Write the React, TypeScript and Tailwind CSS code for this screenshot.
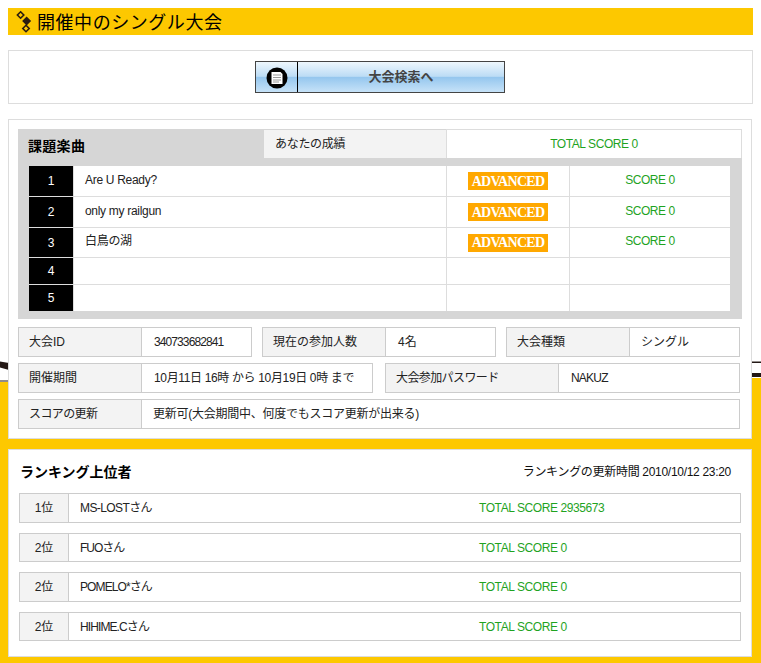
const jp = '"Liberation Sans","Noto Sans CJK JP",sans-serif';

function TitleIcon() {
  return (
    <svg width="18" height="24" viewBox="0 0 18 24" className="shrink-0">
      <path d="M4.6 1.8 L7.8 5 L4.6 8.2 L1.4 5 Z" fill="#fdc800" stroke="#2b1d10" strokeWidth="1.6" />
      <path d="M10.6 6.5 L15.1 11 L10.6 15.5 L6.1 11 Z" fill="#2b1d10" />
      <path d="M10 15.3 L13.2 18.5 L10 21.7 L6.8 18.5 Z" fill="#fdc800" stroke="#2b1d10" strokeWidth="1.6" />
    </svg>
  );
}

function DocIcon() {
  return (
    <svg width="22" height="22" viewBox="0 0 22 22">
      <circle cx="11" cy="11" r="10.5" fill="#000" />
      <path d="M5.5 5 H14.5 L16.5 7 V17 H5.5 Z" fill="#fff" />
      <path d="M7 8 H15 M7 10.5 H15 M7 13 H15 M7 15 H13" stroke="#999" strokeWidth="1" />
    </svg>
  );
}

function Green({ children, className = "" }: { children: React.ReactNode; className?: string }) {
  return <span className={"text-[12px] tracking-[-0.42px] text-[#1fa31f] whitespace-nowrap " + className}>{children}</span>;
}

function Advanced() {
  return (
    <span className="flex h-[18px] w-[80px] items-center justify-center bg-[#ffa800] font-['Liberation_Serif',serif] text-[14px] font-bold tracking-[-0.7px] text-white">
      ADVANCED
    </span>
  );
}

const songs = [
  { n: "1", t: "Are U Ready?", h: "h-[31px]", adv: true },
  { n: "2", t: "only my railgun", h: "h-[31px]", adv: true },
  { n: "3", t: "白鳥の湖", h: "h-[30px]", adv: true },
  { n: "4", t: "", h: "h-[27px]", adv: false },
  { n: "5", t: "", h: "h-[26px]", adv: false },
];

function Info({
  label,
  value,
  w,
  lw,
  lt = "",
  vt = "",
}: {
  label: string;
  value: string;
  w: string;
  lw: string;
  lt?: string;
  vt?: string;
}) {
  return (
    <div className={"flex h-[30px] border border-[#cccccc] bg-white text-[12px] text-[#222] " + w}>
      <div className={"flex items-center border-r border-[#cccccc] bg-[#f3f3f3] pl-[10px] whitespace-nowrap " + lw + " " + lt}>{label}</div>
      <div className={"flex flex-1 items-center pl-[12px] whitespace-nowrap " + vt}>{value}</div>
    </div>
  );
}

const ranks = [
  { r: "1位", n: "MS-LOSTさん", s: "TOTAL SCORE 2935673", h: "h-[30px]", m: "mb-[10px]", t: "tracking-[-0.6px]" },
  { r: "2位", n: "FUOさん", s: "TOTAL SCORE 0", h: "h-[29px]", m: "mb-[10px]", t: "tracking-[-1px]" },
  { r: "2位", n: "POMELO*さん", s: "TOTAL SCORE 0", h: "h-[30px]", m: "mb-[10px]", t: "tracking-[-0.9px]" },
  { r: "2位", n: "HIHIME.Cさん", s: "TOTAL SCORE 0", h: "h-[29px]", m: "", t: "tracking-[-0.9px]" },
];

export default function App() {
  return (
    <div
      className="relative h-[663px] w-[761px] overflow-hidden bg-[linear-gradient(to_bottom,#ffffff_0,#ffffff_382px,#fdc800_382px,#fdc800_100%)] pl-[8px] pt-[8px] text-black"
      style={{ fontFamily: jp }}
    >
      <svg width="761" height="30" viewBox="0 0 761 30" className="absolute left-0 top-[358px]">
        <path d="M0 3.5 L9 5 L9 12 L0 9.5 Z" fill="#231815" />
        <path d="M0 22.5 H9 V23.5 H0 Z" fill="#231815" />
        <path d="M752 3.5 H761 V5 H752 Z" fill="#231815" />
        <path d="M752 15 H761 V19 H752 Z" fill="#231815" />
        <path d="M752 20 H761 V30 H752 Z" fill="#fdc800" />
      </svg>

      <div className="relative w-[745px]">
        <h1 className="flex h-[27px] items-center gap-[3px] bg-[#fdc800] pl-[8px] text-[18px] font-normal leading-none tracking-[0.55px]">
          <TitleIcon />
          <span className="pt-[3px]">開催中のシングル大会</span>
        </h1>

        <div className="mt-[15px] flex h-[54px] items-center justify-center border border-[#dddddd] bg-white pr-[1px]">
          <button className="flex h-[32px] w-[250px] border border-[#444444] bg-[linear-gradient(to_bottom,#eef7fd_0%,#bcdcf5_48%,#94c6ee_50%,#c6e2f8_100%)]">
            <span className="flex h-full w-[42px] items-center justify-center border-r border-black pt-px">
              <DocIcon />
            </span>
            <span className="flex h-full flex-1 items-center justify-center text-[13px] font-bold text-[#444444]">
              大会検索へ
            </span>
          </button>
        </div>

        <div className="mt-[15px] h-[320px] w-[744px] border border-[#dddddd] bg-white p-[9px]">
          <div className="h-[190px] w-[724px] bg-[#d6d6d6]">
            <div className="flex h-[29px] items-stretch">
              <div className="flex w-[246px] items-center pl-[10px] pt-[5px] text-[14px] font-bold tracking-[0.3px]">課題楽曲</div>
              <div className="mt-px flex w-[182px] items-center bg-[#f3f3f3] pl-[11px] text-[12px] tracking-[-0.3px] text-[#222]">
                あなたの成績
              </div>
              <div className="flex flex-1 items-center justify-center border-l border-r border-t border-[#dddddd] bg-white">
                <Green>TOTAL SCORE 0</Green>
              </div>
            </div>
            <div className="ml-[11px] mt-[8px] w-[701px] bg-white">
              {songs.map((s, i) => (
                <div key={s.n} className={"flex " + s.h + (i < 4 ? " border-b border-[#dddddd]" : "")}>
                  <div className="flex w-[45px] items-center justify-center border-r border-[#dddddd] text-[12px] text-white">
                    <span className="flex h-full w-full items-center justify-center bg-black">{s.n}</span>
                  </div>
                  <div className="flex w-[372px] items-center pb-[3px] pl-[11px] text-[12px] tracking-[-0.3px] text-[#222]">{s.t}</div>
                  <div className="flex w-[124px] items-center justify-center border-x border-[#dddddd]">
                    {s.adv && <Advanced />}
                  </div>
                  <div className="flex flex-1 items-center justify-center pb-[3px]">
                    {s.adv && <Green>SCORE 0</Green>}
                  </div>
                </div>
              ))}
            </div>
          </div>

          <div className="mt-[8px] flex gap-[10px]">
            <Info label="大会ID" value="340733682841" w="w-[234px]" lw="w-[123px]" vt="tracking-[-0.9px]" />
            <Info label="現在の参加人数" value="4名" w="w-[234px]" lw="w-[123px]" />
            <Info label="大会種類" value="シングル" w="w-[234px]" lw="w-[123px]" vt="-ml-px" />
          </div>
          <div className="mt-[6px] flex gap-[12px]">
            <Info label="開催期間" value="10月11日 16時 から 10月19日 0時 まで" w="w-[355px]" lw="w-[123px]" vt="tracking-[-0.35px]" />
            <Info label="大会参加パスワード" value="NAKUZ" w="w-[355px]" lw="w-[173px]" lt="tracking-[-0.6px]" vt="tracking-[-0.8px]" />
          </div>
          <div className="mt-[6px]">
            <Info label="スコアの更新" value="更新可(大会期間中、何度でもスコア更新が出来る)" w="w-[722px]" lw="w-[123px]" lt="tracking-[-0.6px]" vt="-ml-px tracking-[-0.25px]" />
          </div>
        </div>

        <div className="mt-[10px] h-[208px] w-[744px] border border-[#dddddd] bg-white pl-[10px] pt-[13px]">
          <div className="flex h-[18px] items-center justify-between pr-[20px]">
            <div className="pl-[1px] text-[14px] font-bold">ランキング上位者</div>
            <div className="text-[12px] tracking-[-0.3px] text-[#111]">ランキングの更新時間 2010/10/12 23:20</div>
          </div>
          <div className="mt-[12px] w-[722px]">
            {ranks.map((r) => (
              <div key={r.n} className={"flex border border-[#cccccc] text-[12px] text-[#222] " + r.h + " " + r.m}>
                <div className="flex w-[49px] items-center justify-center border-r border-[#cccccc] bg-[#f3f3f3]">{r.r}</div>
                <div className={"flex w-[410px] items-center pl-[11px] " + r.t}>{r.n}</div>
                <div className="flex flex-1 items-center"><Green>{r.s}</Green></div>
              </div>
            ))}
          </div>
        </div>
      </div>
    </div>
  );
}
